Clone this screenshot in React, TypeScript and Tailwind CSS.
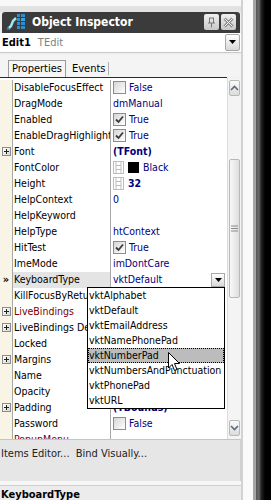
import React from "react";

const F = "font-['DejaVu_Sans_Condensed','DejaVu_Sans',sans-serif]";

function Check({ on }: { on: boolean }) {
  return (
    <span className="inline-flex w-[13px] h-[13px] shrink-0 border border-[#8c8c8c] bg-gradient-to-br from-[#d6d6d6] to-[#ffffff] items-center justify-center mr-[3px]">
      {on && (
        <svg width="9" height="9" viewBox="0 0 9 9">
          <path d="M1 4.5 L3.5 7 L8 1.5" fill="none" stroke="#3a3a3a" strokeWidth="1.8" />
        </svg>
      )}
    </span>
  );
}

function Film() {
  return (
    <svg width="11" height="13" viewBox="0 0 11 13" className="shrink-0 mr-[4px]">
      <g stroke="#bdbdbd" fill="none">
        <rect x="0.5" y="0.5" width="10" height="12" />
        <line x1="3" y1="0" x2="3" y2="13" />
        <line x1="8" y1="0" x2="8" y2="13" />
        <line x1="3" y1="4.5" x2="8" y2="4.5" />
        <line x1="3" y1="8.5" x2="8" y2="8.5" />
      </g>
    </svg>
  );
}

function Plus() {
  return (
    <span className="w-[9px] h-[9px] border border-[#8c8c8c] bg-gradient-to-br from-[#ffffff] to-[#d8d8d8] flex items-center justify-center">
      <svg width="7" height="7" viewBox="0 0 7 7">
        <path d="M1 3.5 H6 M3.5 1 V6" stroke="#222" strokeWidth="1" />
      </svg>
    </span>
  );
}

type Row = {
  name: string;
  v?: React.ReactNode;
  plus?: boolean;
  maroon?: boolean;
  sel?: boolean;
};

const navy = "text-[#000080]";

const rows: Row[] = [
  { name: "DisableFocusEffect", v: <><Check on={false} /><span className={navy}>False</span></> },
  { name: "DragMode", v: <span className={navy}>dmManual</span> },
  { name: "Enabled", v: <><Check on /><span className={navy}>True</span></> },
  { name: "EnableDragHighlight", v: <><Check on /><span className={navy}>True</span></> },
  { name: "Font", plus: true, v: <span className={`${navy} font-bold`}>(TFont)</span> },
  {
    name: "FontColor",
    v: (
      <>
        <Film />
        <span className="w-[11px] h-[11px] bg-black mr-[4px] shrink-0" />
        <span className={navy}>Black</span>
      </>
    ),
  },
  { name: "Height", v: <><Film /><span className={`${navy} font-bold`}>32</span></> },
  { name: "HelpContext", v: <span className={navy}>0</span> },
  { name: "HelpKeyword" },
  { name: "HelpType", v: <span className={navy}>htContext</span> },
  { name: "HitTest", v: <><Check on /><span className={navy}>True</span></> },
  { name: "ImeMode", v: <span className={navy}>imDontCare</span> },
  { name: "KeyboardType", sel: true },
  { name: "KillFocusByReturn" },
  { name: "LiveBindings", plus: true, maroon: true },
  { name: "LiveBindings Designer", plus: true },
  { name: "Locked" },
  { name: "Margins", plus: true },
  { name: "Name" },
  { name: "Opacity" },
  { name: "Padding", plus: true, v: <span className={`${navy} font-bold`}>(TBounds)</span> },
  { name: "Password", v: <><Check on={false} /><span className={navy}>False</span></> },
  { name: "PopupMenu", maroon: true },
];

const items = [
  "vktAlphabet",
  "vktDefault",
  "vktEmailAddress",
  "vktNamePhonePad",
  "vktNumberPad",
  "vktNumbersAndPunctuation",
  "vktPhonePad",
  "vktURL",
];

function ScrollBtn({ up }: { up: boolean }) {
  return (
    <div className="h-[16px] mx-[1px] rounded-[2px] border border-[#b8b8b8] bg-gradient-to-b from-[#fafafa] to-[#dcdcdc] flex items-center justify-center">
      <svg width="9" height="6" viewBox="0 0 9 6">
        <path d={up ? "M1 5 L4.5 1.5 L8 5" : "M1 1 L4.5 4.5 L8 1"} fill="none" stroke="#5a6a7a" strokeWidth="1.6" />
      </svg>
    </div>
  );
}

export default function App() {
  return (
    <div className={`relative w-[271px] h-[500px] overflow-hidden flex bg-[#efefef] text-[11px] leading-none text-black ${F}`}>
      {/* main panel */}
      <div className="w-[241px] flex flex-col shrink-0">
        {/* top strip */}
        <div className="h-[6px] bg-[#f8f8f8]" />
        <div className="h-[6px] bg-[#e2e2e2]" />
        {/* title bar */}
        <div className="h-[21px] ml-[2px] mr-[1px] rounded-t-[3px] bg-[#3b3b3b] flex items-center pl-[4px] pr-[4px]">
          <svg width="20" height="18" viewBox="0 0 20 18" className="shrink-0">
            <rect x="11" y="1" width="3" height="3" fill="#2a8fd0" />
            <rect x="15" y="1" width="4" height="3" fill="#2a8fd0" />
            <rect x="11" y="5" width="3" height="3" fill="#2a8fd0" />
            <rect x="15" y="5" width="4" height="3" fill="#35a5e0" />
            <rect x="11" y="9" width="3" height="3" fill="#2a8fd0" />
            <rect x="15" y="9" width="4" height="3" fill="#2a8fd0" />
            <rect x="11" y="13" width="3" height="3" fill="#2a8fd0" />
            <rect x="15" y="13" width="4" height="3" fill="#2a8fd0" />
            <path d="M2 16 L5 13 L7 8 L10 5" fill="none" stroke="#9ee6f0" strokeWidth="2.5" />
            <path d="M1 17 L3 15" stroke="#1e6fa0" strokeWidth="2" />
          </svg>
          <span className="ml-[6px] text-white font-bold text-[12px]">Object Inspector</span>
          <div className="ml-auto flex gap-[2px]">
            <div className="w-[15px] h-[16px] rounded-[2px] bg-gradient-to-b from-[#f0f0f0] to-[#c8c8c8] flex items-center justify-center">
              <svg width="9" height="11" viewBox="0 0 9 11">
                <path d="M2 1 H7 M2.5 1 V6 M6.5 1 V6 M1 6 H8 M4.5 6 V10.5" fill="none" stroke="#777" strokeWidth="1" />
              </svg>
            </div>
            <div className="w-[15px] h-[16px] rounded-[2px] bg-gradient-to-b from-[#f0f0f0] to-[#c8c8c8] flex items-center justify-center">
              <svg width="11" height="11" viewBox="0 0 11 11">
                <path d="M1.5 1.5 L9.5 9.5 M9.5 1.5 L1.5 9.5" fill="none" stroke="#8a8a8a" strokeWidth="3" />
                <path d="M1.5 1.5 L9.5 9.5 M9.5 1.5 L1.5 9.5" fill="none" stroke="#f4f4f4" strokeWidth="1" />
              </svg>
            </div>
          </div>
        </div>
        {/* combo */}
        <div className="h-[20px] bg-white border-b border-[#c8c8c8] flex items-center pl-[2px] pr-[1px]">
          <span className="font-bold">Edit1</span>
          <span className="ml-[7px] text-[#808080]">TEdit</span>
          <div className="ml-auto w-[15px] h-[17px] rounded-[2px] border border-[#a8a8a8] bg-gradient-to-b from-[#ffffff] to-[#d8d8d8] flex items-center justify-center">
            <svg width="7" height="4" viewBox="0 0 7 4">
              <path d="M0 0 H7 L3.5 4 Z" fill="#000" />
            </svg>
          </div>
        </div>
        <div className="h-[2px]" />
        {/* tabs */}
        <div className="h-[22px] bg-[#f4f4f4] flex items-end pl-[8px]">
          <div className="h-[17px] px-[3px] border-l border-t border-r border-[#9a9a9a] bg-[#f6f6f6] flex items-center">
            Properties
          </div>
          <div className="h-[17px] pl-[6px] pr-[3px] flex items-center">Events</div>
          <div className="w-[1px] h-[13px] mb-[2px] bg-[#b0b0b0]" />
        </div>
        <div className="h-[1px] bg-[#2a2a2a] mr-[14px]" />
        {/* grid */}
        <div className="h-[363px] flex overflow-hidden text-[10.5px]">
          <div className="w-[227px] flex flex-col pt-[2px] overflow-hidden bg-white">
            {rows.map((r) => (
              <div key={r.name} className="h-[16px] flex shrink-0">
                <div className="w-[13px] shrink-0 bg-[#f8f4e6] border-r border-[#a8a8a8] flex items-center justify-center">
                  {r.plus && <Plus />}
                  {r.sel && <span className="text-[11px] font-bold">»</span>}
                </div>
                <div
                  className={`w-[98px] shrink-0 pl-[1px] border-r border-[#a8a8a8] flex items-center overflow-hidden whitespace-nowrap ${
                    r.sel ? "bg-[#e4e4e4]" : ""
                  } ${r.maroon ? "text-[#800000]" : ""}`}
                >
                  {r.name}
                </div>
                <div className="flex-1 pl-[2px] flex items-center whitespace-nowrap overflow-hidden">
                  {r.sel ? (
                    <div className="flex-1 flex items-center h-[16px]">
                      <span className={navy}>vktDefault</span>
                      <div className="ml-auto mr-[2px] w-[14px] h-[14px] border border-[#a8a8a8] bg-gradient-to-b from-[#ffffff] to-[#d8d8d8] flex items-center justify-center">
                        <svg width="7" height="4" viewBox="0 0 7 4">
                          <path d="M0 0 H7 L3.5 4 Z" fill="#000" />
                        </svg>
                      </div>
                    </div>
                  ) : (
                    r.v
                  )}
                </div>
              </div>
            ))}
          </div>
          {/* scrollbar */}
          <div className="w-[14px] shrink-0 bg-[#f4f4f4] border-l border-[#dcdcdc] flex flex-col pt-[2px] pb-[3px]">
            <ScrollBtn up />
            <div className="h-[63px]" />
            <div className="h-[139px] mx-[1px] rounded-[2px] border border-[#b8b8b8] bg-gradient-to-r from-[#f8f8f8] to-[#dedede] flex items-center justify-center">
              <svg width="7" height="7" viewBox="0 0 7 7">
                <path d="M0 1 H7 M0 3.5 H7 M0 6 H7" stroke="#8a8a8a" strokeWidth="1" />
              </svg>
            </div>
            <div className="flex-1" />
            <ScrollBtn up={false} />
          </div>
        </div>
        {/* bottom panels */}
        <div className="h-[42px] bg-[#e6e6e6] border-t border-[#c4c4c4] border-r border-r-[#d0d0d0] pl-[1px] pt-[8px] text-[#222]">
          Items Editor...&nbsp;&nbsp;Bind Visually...
        </div>
        <div className="h-[4px] bg-[#f6f6f6]" />
        <div className="flex-1 bg-[#ececec] border-t border-[#d0d0d0] pl-[1px] pt-[3px] font-bold">KeyboardType</div>
      </div>
      {/* right device edge */}
      <div className="flex-1 bg-[linear-gradient(90deg,#d2d2d2_0px,#d2d2d2_2px,#fafafa_2px,#fafafa_12px,#a4a4a4_12px,#a4a4a4_15px,#555_15px,#6a6a6a_18px,#262626_20px,#000_24px,#000_30px)]" />

      {/* dropdown list */}
      <div className="absolute left-[87px] top-[287px] w-[138px] bg-white border border-black flex flex-col text-[10.5px]">
        {items.map((it) => (
          <div
            key={it}
            className={`h-[15px] shrink-0 pl-[1px] flex items-center whitespace-nowrap overflow-hidden ${
              it === "vktNumberPad" ? "bg-[#bcbcbc] outline-1 outline-dotted outline-black -outline-offset-1" : ""
            }`}
          >
            {it}
          </div>
        ))}
      </div>

      {/* mouse cursor */}
      <svg className="absolute left-[168px] top-[352px]" width="13" height="20" viewBox="0 0 13 20">
        <path d="M0.5 0.5 V16 L4 12.5 L6.5 18.5 L9 17.5 L6.5 11.5 H11.5 Z" fill="#fff" stroke="#000" strokeWidth="1" />
      </svg>
    </div>
  );
}
